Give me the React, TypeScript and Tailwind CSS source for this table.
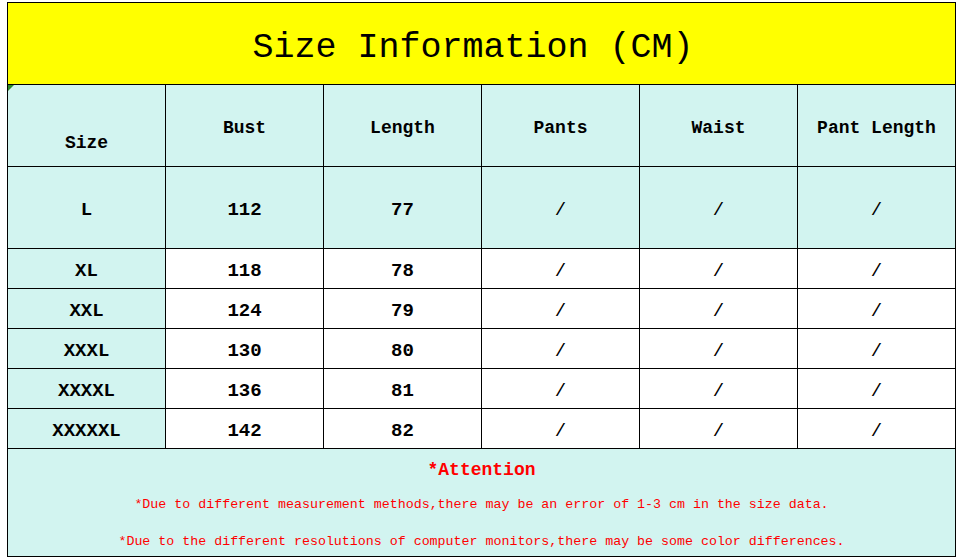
const rows = [
   { size: 'L', bust: '112', length: '77', tall: true },
   { size: 'XL', bust: '118', length: '78' },
   { size: 'XXL', bust: '124', length: '79' },
   { size: 'XXXL', bust: '130', length: '80' },
   { size: 'XXXXL', bust: '136', length: '81' },
   { size: 'XXXXXL', bust: '142', length: '82' },
];

const heads = ['Bust', 'Length', 'Pants', 'Waist', 'Pant Length'];

const cell = 'flex items-center justify-center border-r border-b border-black';

export default function App() {
   return (
      <div className="w-[958px] h-[558px] bg-white overflow-hidden font-['Liberation_Mono',monospace] text-black">
         <div className="ml-[7px] mt-[2px] w-[949px] border-l border-t border-black relative">
            <div className="h-[82px] bg-[#ffff00] border-r border-b border-black flex items-center justify-center text-[35px] leading-none pt-[10px] pr-[17px]">
               Size Information (CM)
            </div>
            <span className="absolute left-0 top-[82px] w-0 h-0 border-t-[6px] border-t-[#2e8b2e] border-r-[6px] border-r-transparent"></span>
            <div className="flex h-[82px] bg-[#d2f4f0] text-[18px] font-bold">
               <div className={`${cell} w-[158px] pt-[36px]`}>Size</div>
               {heads.map((h, i) => (
                  <div key={i} className={`${cell} w-[158px] pt-[5px]`}>
                     {h}
                  </div>
               ))}
            </div>
            {rows.map((r, i) => (
               <div
                  key={i}
                  className={`flex ${r.tall ? 'h-[82px] bg-[#d2f4f0]' : 'h-[40px] bg-white'} text-[19px] font-bold`}
               >
                  <div className={`${cell} w-[158px] bg-[#d2f4f0] pt-[5px]`}>{r.size}</div>
                  <div className={`${cell} w-[158px] pt-[5px]`}>{r.bust}</div>
                  <div className={`${cell} w-[158px] pt-[5px]`}>{r.length}</div>
                  <div className={`${cell} w-[158px] pt-[5px] font-normal`}>/</div>
                  <div className={`${cell} w-[158px] pt-[5px] font-normal`}>/</div>
                  <div className={`${cell} w-[158px] pt-[5px] font-normal`}>/</div>
               </div>
            ))}
            <div className="h-[108px] bg-[#d2f4f0] border-r border-b border-black flex flex-col items-center text-[#ff0000]">
               <div className="text-[18px] font-bold mt-[8px]">*Attention</div>
               <div className="text-[13.3px] mt-[11px]">
                  *Due to different measurement methods,there may be an error of 1-3 cm in the size data.
               </div>
               <div className="text-[13.3px] mt-[17px]">
                  *Due to the different resolutions of computer monitors,there may be some color differences.
               </div>
            </div>
         </div>
      </div>
   );
}
